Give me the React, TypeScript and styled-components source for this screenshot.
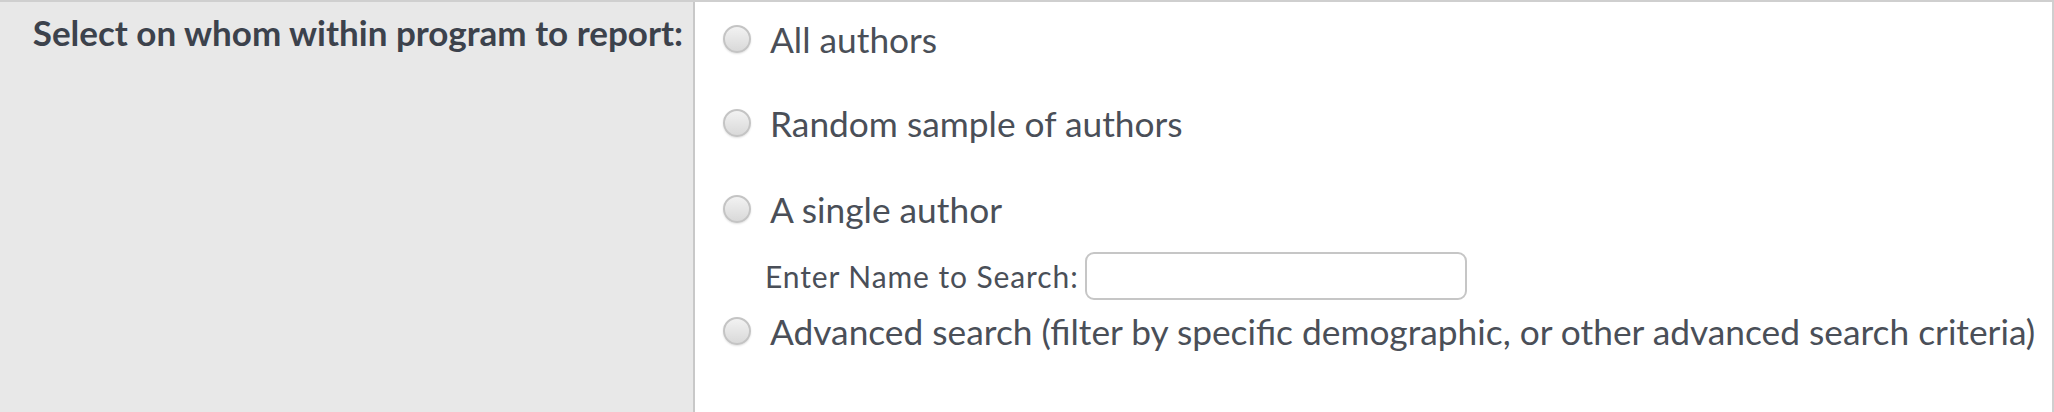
import styled, { createGlobalStyle } from "styled-components";

const GlobalStyle = createGlobalStyle`
  html, body {
    margin: 0;
    padding: 0;
    background: #ffffff;
  }
  body {
    font-family: Lato, "Open Sans", Arial, sans-serif;
  }
`;

const Panel = styled.div`
  display: flex;
  height: 412px;
  box-sizing: border-box;
  border-top: 2px solid #cfcfcf;
  border-right: 2px solid #cfcfcf;
`;

const LabelCell = styled.div`
  flex: 0 0 695px;
  box-sizing: border-box;
  background: #e8e8e8;
  border-right: 2px solid #c8c8c8;
  padding: 9px 10px 0 0;
  text-align: right;
`;

const LabelText = styled.span`
  font-size: 35px;
  font-weight: 700;
  color: #3c424c;
`;

const FieldCell = styled.div`
  flex: 1;
  display: flex;
  flex-direction: column;
  padding: 15px 0 0 28px;
`;

const OptionRow = styled.label<{ $after: number }>`
  display: flex;
  align-items: center;
  height: 44px;
  margin-bottom: ${(p) => p.$after}px;
  font-size: 35.3px;
  color: #4a4f58;
`;

const Radio = styled.input.attrs({ type: "radio" })`
  appearance: none;
  margin: 0 19px 0 0;
  width: 28px;
  height: 28px;
  border-radius: 50%;
  border: 2px solid #c4c4c4;
  box-sizing: border-box;
  background: linear-gradient(#f2f2f2, #d9d9d9);
  box-shadow: 0 1px 2px rgba(0, 0, 0, 0.12);
`;

const SearchRow = styled.div`
  display: flex;
  align-items: center;
  height: 48px;
  margin: 0 0 9px 42px;
  gap: 6px;
`;

const SearchLabel = styled.span`
  font-size: 30px;
  letter-spacing: 0.9px;
  color: #4a4f58;
`;

const SearchInput = styled.input`
  width: 382px;
  height: 48px;
  box-sizing: border-box;
  border: 2px solid #c6c6c6;
  border-radius: 9px;
  background: #fff;
  outline: none;
`;

export default function App() {
  return (
    <>
      <GlobalStyle />
      <Panel>
        <LabelCell>
          <LabelText>Select on whom within program to report:</LabelText>
        </LabelCell>
        <FieldCell>
          <OptionRow $after={40}>
            <Radio name="who" />
            All authors
          </OptionRow>
          <OptionRow $after={42}>
            <Radio name="who" />
            Random sample of authors
          </OptionRow>
          <OptionRow $after={21}>
            <Radio name="who" />
            A single author
          </OptionRow>
          <SearchRow>
            <SearchLabel>Enter Name to Search:</SearchLabel>
            <SearchInput type="text" />
          </SearchRow>
          <OptionRow $after={0}>
            <Radio name="who" />
            Advanced search (filter by specific demographic, or other advanced
            search criteria)
          </OptionRow>
        </FieldCell>
      </Panel>
    </>
  );
}
